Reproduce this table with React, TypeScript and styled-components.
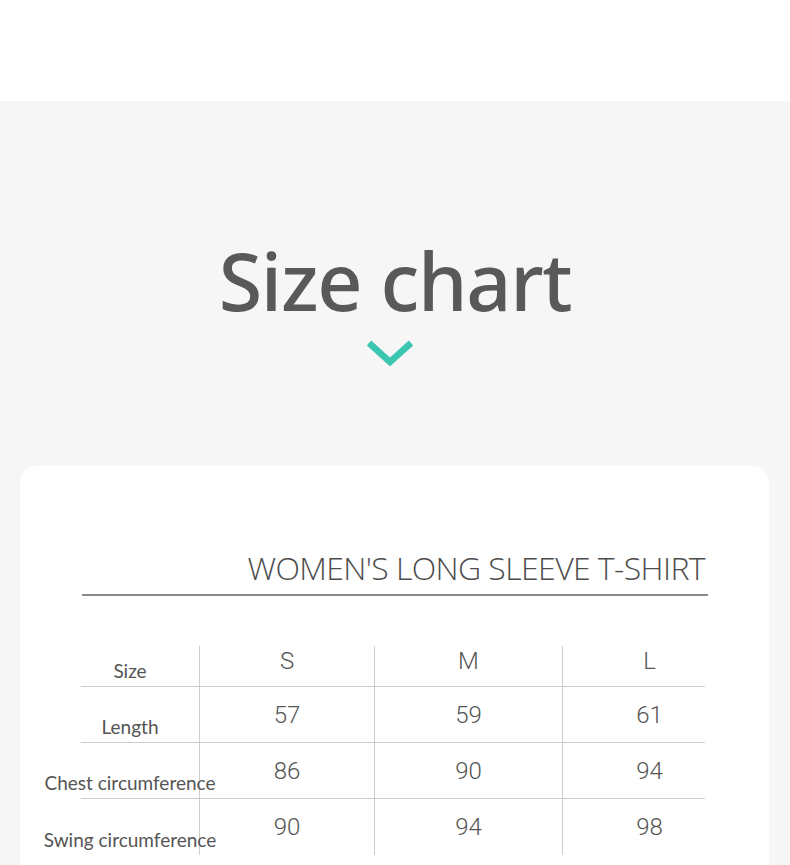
import React from "react";
import styled, { createGlobalStyle } from "styled-components";

const GlobalStyle = createGlobalStyle`
  html, body {
    margin: 0;
    padding: 0;
    background: #f6f6f6;
  }
  body {
    font-family: "Noto Sans", "Open Sans", sans-serif;
    color: #555;
  }
`;

const Page = styled.div`
  min-height: 865px;
  display: flex;
  flex-direction: column;
  overflow: hidden;
`;

const TopBand = styled.div`
  height: 101px;
  background: #ffffff;
`;

const Hero = styled.section`
  display: flex;
  flex-direction: column;
  align-items: center;
  padding-top: 140px;
  height: 225px;
`;

const Title = styled.h1`
  margin: 0;
  font-family: "Noto Sans", sans-serif;
  font-weight: 500;
  font-size: 79px;
  line-height: 1;
  color: #595959;
  letter-spacing: -1.3px;
`;

const Chevron = styled.svg`
  margin: 17px 10px 0 0;
  width: 48px;
  height: 29px;
`;

const Card = styled.section`
  margin: 0 21px 0 20px;
  background: #ffffff;
  border-radius: 16px 16px 0 0;
  padding: 86px 61px 60px 62px;
  min-height: 420px;
`;

const HeadingRow = styled.div`
  display: flex;
  justify-content: flex-end;
  padding-right: 3px;
  padding-bottom: 10px;
  border-bottom: 2px solid #8a8a8a;
`;

const Heading = styled.h2`
  margin: 0;
  font-family: "Open Sans", "Noto Sans", sans-serif;
  font-weight: 350;
  font-stretch: 89%;
  font-size: 32px;
  line-height: 1;
  color: #4d4d4d;
  letter-spacing: -0.6px;
`;

const Table = styled.div`
  margin-top: 50px;
  margin-left: -1px;
  width: 624px;
  display: flex;
  flex-direction: column;
`;

const Row = styled.div<{ $header?: boolean; $last?: boolean }>`
  box-sizing: border-box;
  display: grid;
  grid-template-columns: 118px 175px 188px 143px;
  height: ${(p) => (p.$header ? 41 : 56)}px;
  border-bottom: ${(p) => (p.$last ? "none" : "1px solid #cdcdcd")};
`;

const LabelCell = styled.div`
  display: flex;
  align-items: flex-end;
  justify-content: center;
  padding: 0 20px 6px 0;
  font-family: Lato, "Noto Sans", sans-serif;
  font-size: 19px;
  line-height: 1;
  color: #555;
  white-space: nowrap;
  min-width: 0;
  position: relative;
  z-index: 1;
`;

const ValueCell = styled.div<{ $header?: boolean; $shift?: number }>`
  display: flex;
  align-items: center;
  justify-content: center;
  border-left: 1px solid #cdcdcd;
  padding-bottom: ${(p) => (p.$header ? 10 : 0)}px;
  padding-left: ${(p) => p.$shift ?? 0}px;
  font-family: Roboto, "Liberation Sans", sans-serif;
  font-weight: 300;
  font-size: 24px;
  line-height: 1;
  color: #555;
`;

const sizes = ["S", "M", "L"];
const rows: { label: string; values: string[] }[] = [
  { label: "Length", values: ["57", "59", "61"] },
  { label: "Chest circumference", values: ["86", "90", "94"] },
  { label: "Swing circumference", values: ["90", "94", "98"] },
];

export default function App() {
  return (
    <>
      <GlobalStyle />
      <Page>
        <TopBand />
        <Hero>
          <Title>Size chart</Title>
          <Chevron viewBox="0 0 48 29" aria-hidden>
            <path
              d="M3 6 L24 25 L45 6"
              fill="none"
              stroke="#3cc6b2"
              strokeWidth="6.5"
              strokeLinejoin="miter"
            />
          </Chevron>
        </Hero>
        <Card>
          <HeadingRow>
            <Heading>WOMEN'S LONG SLEEVE T-SHIRT</Heading>
          </HeadingRow>
          <Table>
            <Row $header>
              <LabelCell>Size</LabelCell>
              {sizes.map((s, i) => (
                <ValueCell key={s} $header $shift={i === 2 ? 31 : 0}>
                  {s}
                </ValueCell>
              ))}
            </Row>
            {rows.map((r, ri) => (
              <Row key={r.label} $last={ri === rows.length - 1}>
                <LabelCell>{r.label}</LabelCell>
                {r.values.map((v, i) => (
                  <ValueCell key={i} $shift={i === 2 ? 31 : 0}>
                    {v}
                  </ValueCell>
                ))}
              </Row>
            ))}
          </Table>
        </Card>
      </Page>
    </>
  );
}
